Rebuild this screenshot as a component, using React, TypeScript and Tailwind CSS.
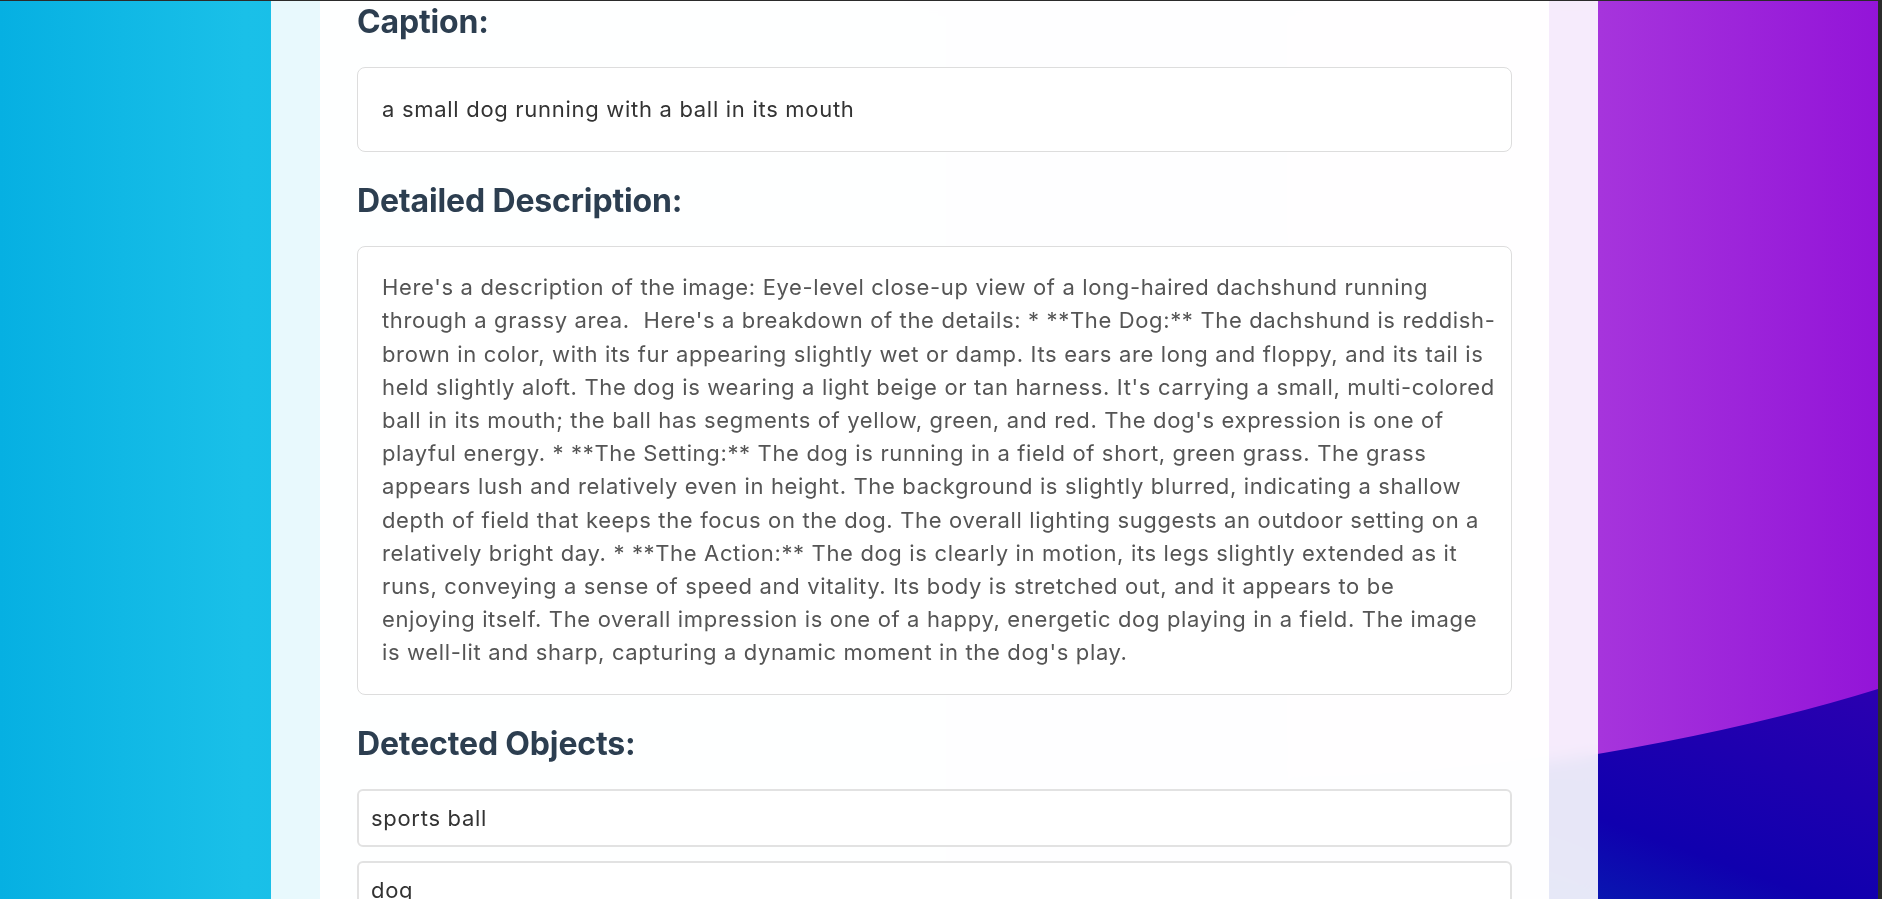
import { Fragment } from 'react';

const descriptionLines = [
  "Here's a description of the image: Eye-level close-up view of a long-haired dachshund running",
  "through a grassy area.  Here's a breakdown of the details: * **The Dog:** The dachshund is reddish-",
  'brown in color, with its fur appearing slightly wet or damp. Its ears are long and floppy, and its tail is',
  "held slightly aloft. The dog is wearing a light beige or tan harness. It's carrying a small, multi-colored",
  "ball in its mouth; the ball has segments of yellow, green, and red. The dog's expression is one of",
  'playful energy. * **The Setting:** The dog is running in a field of short, green grass. The grass',
  'appears lush and relatively even in height. The background is slightly blurred, indicating a shallow',
  'depth of field that keeps the focus on the dog. The overall lighting suggests an outdoor setting on a',
  'relatively bright day. * **The Action:** The dog is clearly in motion, its legs slightly extended as it',
  'runs, conveying a sense of speed and vitality. Its body is stretched out, and it appears to be',
  'enjoying itself. The overall impression is one of a happy, energetic dog playing in a field. The image',
  "is well-lit and sharp, capturing a dynamic moment in the dog's play.",
];

const detectedObjects = ['sports ball', 'dog'];

function SectionTitle({ children }: { children: React.ReactNode }) {
  return (
    <h3 className="mb-[25px] text-[32px] font-bold leading-[40px] tracking-[-0.15px] text-[#2c3e50]">{children}</h3>
  );
}

export default function App() {
  return (
    <div className="flex h-[899px] overflow-hidden border-t border-[#2b2b2b] bg-[linear-gradient(90deg,#06b0e2_0%,#1ac0e8_13%,#14bde8_22%,#a634dc_85%,#9314d8_100%)] font-['Inter',sans-serif]">
      <div className="relative h-full flex-1">
        {/* wallpaper shape, bottom right */}
        <svg className="absolute inset-0 h-full w-full" viewBox="0 0 1878 898" preserveAspectRatio="none">
          <defs>
            <linearGradient id="deep" x1="0" y1="1" x2="1" y2="0">
              <stop offset="0" stopColor="#0034b4" />
              <stop offset="0.45" stopColor="#1000ae" />
              <stop offset="1" stopColor="#2b00b0" />
            </linearGradient>
          </defs>
          <path d="M1300 791 Q1650 759 1878 688 L1878 898 L1300 898 Z" fill="url(#deep)" />
        </svg>

        <div className="relative ml-[271px] h-full w-[1327px] bg-white/90 px-[49px] backdrop-blur-sm">
          <div className="flex h-full flex-col gap-[29.5px] bg-white/95 px-[37px] pt-[0.5px]">
            <section>
              <SectionTitle>Caption:</SectionTitle>
              <div className="rounded-lg border border-[#dddddd] bg-white px-6 py-[25px] text-[22px] leading-[33.2px] tracking-[0.7px] text-[#333333]">
                a small dog running with a ball in its mouth
              </div>
            </section>

            <section>
              <SectionTitle>Detailed Description:</SectionTitle>
              <p className="whitespace-pre rounded-lg border border-[#dddddd] bg-white p-6 text-[22px] leading-[33.2px] tracking-[0.65px] text-[#555555]">
                {descriptionLines.map((line, i) => (
                  <Fragment key={i}>
                    {line}
                    {i < descriptionLines.length - 1 && <br />}
                  </Fragment>
                ))}
              </p>
            </section>

            <section>
              <SectionTitle>Detected Objects:</SectionTitle>
              <ul className="mt-[4px] flex flex-col gap-[13.7px]">
                {detectedObjects.map((obj) => (
                  <li
                    key={obj}
                    className="rounded-md border-2 border-[#e2e2e2] bg-white px-3 py-3 text-[22px] leading-[30px] tracking-[0.7px] text-[#333333]"
                  >
                    {obj}
                  </li>
                ))}
              </ul>
            </section>
          </div>
        </div>
      </div>
      <div className="h-full w-[4px] bg-[#2b2b2b]" />
    </div>
  );
}
